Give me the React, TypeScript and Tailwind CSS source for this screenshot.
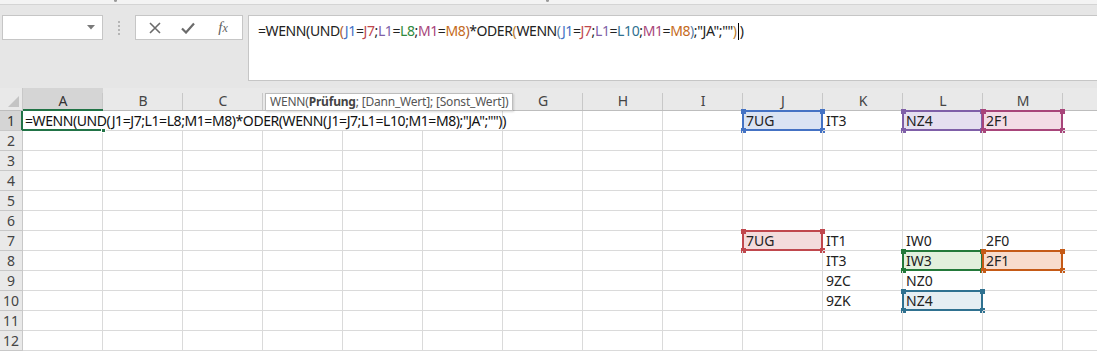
import React from "react";

const COLS = ["A", "B", "C", "D", "E", "F", "G", "H", "I", "J", "K", "L", "M", "N"];
const HIDDEN_LABELS = ["D", "E", "F", "N"];
const ROWS = [1, 2, 3, 4, 5, 6, 7, 8, 9, 10, 11, 12];

const VALUES: Record<string, string> = {
  J1: "7UG",
  K1: "IT3",
  L1: "NZ4",
  M1: "2F1",
  J7: "7UG",
  K7: "IT1",
  L7: "IW0",
  M7: "2F0",
  K8: "IT3",
  L8: "IW3",
  M8: "2F1",
  K9: "9ZC",
  L9: "NZ0",
  K10: "9ZK",
  L10: "NZ4",
};

type HL = { fill: string; border: string; sq: string };
const HIGHLIGHTS: Record<string, HL> = {
  J1: { fill: "bg-[#dae3f3]", border: "border-[#4472c4]", sq: "bg-[#4472c4]" },
  L1: { fill: "bg-[#e5dff0]", border: "border-[#7f5fa8]", sq: "bg-[#7f5fa8]" },
  M1: { fill: "bg-[#f3dce6]", border: "border-[#a8457a]", sq: "bg-[#a8457a]" },
  J7: { fill: "bg-[#f3dbdc]", border: "border-[#c0474d]", sq: "bg-[#c0474d]" },
  L8: { fill: "bg-[#e2f0dd]", border: "border-[#23793a]", sq: "bg-[#23793a]" },
  M8: { fill: "bg-[#f8dccc]", border: "border-[#c55a16]", sq: "bg-[#c55a16]" },
  L10: { fill: "bg-[#e5eef3]", border: "border-[#2f7190]", sq: "bg-[#2f7190]" },
};

const FONT = "font-['Segoe_UI','Noto_Sans','Open_Sans',sans-serif]";

function Seg({ c, children }: { c: string; children: React.ReactNode }) {
  return <span className={c}>{children}</span>;
}

function FormulaColored() {
  const blue = "text-[#4472c4]";
  const red = "text-[#c0474d]";
  const purple = "text-[#7f5fa8]";
  const green = "text-[#2f8a3e]";
  const magenta = "text-[#a8457a]";
  const orange = "text-[#c56a20]";
  const teal = "text-[#2f7190]";
  const p1 = "text-[#b0602d]";
  const p2 = "text-[#b87a2a]";
  const p3 = "text-[#5a7fa8]";
  return (
    <span>
      =WENN(UND<Seg c={p1}>(</Seg>
      <Seg c={blue}>J1</Seg>=<Seg c={red}>J7</Seg>;<Seg c={purple}>L1</Seg>=<Seg c={green}>L8</Seg>;
      <Seg c={magenta}>M1</Seg>=<Seg c={orange}>M8</Seg>
      <Seg c={p1}>)</Seg>*ODER<Seg c={p2}>(</Seg>WENN<Seg c={p3}>(</Seg>
      <Seg c={blue}>J1</Seg>=<Seg c={red}>J7</Seg>;<Seg c={purple}>L1</Seg>=<Seg c={teal}>L10</Seg>;
      <Seg c={magenta}>M1</Seg>=<Seg c={orange}>M8</Seg>
      <Seg c={p3}>)</Seg>;"JA";""<Seg c={p2}>)</Seg>
      <span className="inline-block w-px h-[17px] bg-black align-middle -mt-[2px] mx-[1px]" />
      <span>)</span>
    </span>
  );
}

function Corner({ pos, cls }: { pos: string; cls: string }) {
  return <span className={`absolute w-[5px] h-[5px] ${pos} ${cls}`} />;
}

function Cell({ id, col, row }: { id: string; col: string; row: number }) {
  const hl = HIGHLIGHTS[id];
  const v = VALUES[id];
  const isA1 = id === "A1";
  const hideRight = row === 1 && ["A", "B", "C", "D", "E"].includes(col);
  return (
    <div
      className={`relative w-[80px] h-[20px] shrink-0 border-b border-[#dadada] ${
        hideRight ? "" : "border-r"
      } ${hl ? hl.fill : ""}`}
    >
      {v && (
        <span className="absolute left-[3px] top-[1px] text-[14px] leading-[18px] text-[#222]">{v}</span>
      )}
      {isA1 && (
        <>
          <span className="absolute left-[2px] top-[1px] text-[14px] leading-[18px] tracking-[-0.42px] text-[#111] whitespace-nowrap z-10">
            =WENN(UND(J1=J7;L1=L8;M1=M8)*ODER(WENN(J1=J7;L1=L10;M1=M8);"JA";""))
          </span>
          <span className="absolute -left-px -bottom-px w-[81px] h-[2px] bg-[#217346]" />
          <span className="absolute -right-[3px] -bottom-[3px] w-[5px] h-[5px] bg-[#217346] border border-white z-20" />
        </>
      )}
      {hl && (
        <>
          <span className={`absolute -left-px -top-px -right-px -bottom-px border-2 ${hl.border}`} />
          <Corner pos="-left-[2px] -top-[2px]" cls={hl.sq} />
          <Corner pos="-right-[3px] -top-[2px]" cls={hl.sq} />
          <Corner pos="-left-[2px] -bottom-[3px]" cls={hl.sq} />
          <Corner pos="-right-[3px] -bottom-[3px]" cls={hl.sq} />
        </>
      )}
    </div>
  );
}

export default function App() {
  return (
    <div className={`relative w-[1097px] h-[351px] overflow-hidden bg-[#e6e6e6] ${FONT}`}>
      {/* top strip (bottom edge of the ribbon) */}
      <div className="relative h-[5px] bg-[#f3f3f3] border-b border-[#d4d4d4] overflow-hidden">
        <span className="absolute left-[114px] top-0 w-[3px] h-[2px] bg-[#9a9a9a] rounded-b-[2px]" />
        <span className="absolute left-[546px] top-0 w-[3px] h-[2px] bg-[#9a9a9a] rounded-b-[2px]" />
      </div>

      {/* formula bar area */}
      <div className="flex items-start h-[83px] pt-[10px]">
        <div className="ml-[2px] w-[101px] h-[25px] bg-white border border-[#c6c6c6] flex items-center justify-end pr-[7px]">
          <svg width="8" height="5" viewBox="0 0 8 5">
            <path d="M0 0 L8 0 L4 4.5 Z" fill="#7a7a7a" />
          </svg>
        </div>
        <div className="w-[32px] h-[25px] flex items-center justify-center">
          <div className="flex flex-col gap-[2px]">
            <span className="w-[2px] h-[2px] bg-[#b5b5b5]" />
            <span className="w-[2px] h-[2px] bg-[#b5b5b5]" />
            <span className="w-[2px] h-[2px] bg-[#b5b5b5]" />
            <span className="w-[2px] h-[2px] bg-[#b5b5b5]" />
          </div>
        </div>
        <div className="w-[108px] h-[25px] bg-white border border-[#c6c6c6] flex items-center">
          <div className="w-[36px] flex justify-center pl-[2px]">
            <svg width="12" height="12" viewBox="0 0 12 12">
              <path d="M1 1 L11 11 M11 1 L1 11" stroke="#6b6b6b" strokeWidth="1.6" />
            </svg>
          </div>
          <div className="w-[32px] flex justify-center">
            <svg width="14" height="12" viewBox="0 0 14 12">
              <path d="M1 6.5 L5 10.5 L13 1.5" stroke="#6b6b6b" strokeWidth="2.2" fill="none" />
            </svg>
          </div>
          <div className="w-[38px] flex justify-center">
            <span className="font-['Liberation_Serif',serif] italic text-[15px] leading-[16px] text-[#5f5f5f]">
              f<span className="text-[12px]">x</span>
            </span>
          </div>
        </div>
        <div className="ml-[5px] flex-1 h-[66px] bg-white border-y border-l border-[#c6c6c6] pl-[9px] pt-[5px]">
          <div className="text-[14px] leading-[20px] tracking-[-0.4px] text-[#222] whitespace-nowrap">
            <FormulaColored />
          </div>
        </div>
      </div>

      {/* grid */}
      <div className="bg-white">
        {/* header row */}
        <div className="flex h-[23px] bg-[#e9e9e9] border-b border-[#bdbdbd]">
          <div className="w-[23px] shrink-0 border-r border-[#c8c8c8] flex items-end justify-end pr-[3px] pb-[3px]">
            <svg width="11" height="11" viewBox="0 0 11 11">
              <path d="M11 0 L11 11 L0 11 Z" fill="#c4c4c4" />
            </svg>
          </div>
          {COLS.map((c) => (
            <div
              key={c}
              className={`relative w-[80px] shrink-0 flex items-center justify-center text-[14px] ${
                c === "A" ? "bg-[#d5d5d5] text-[#333]" : "text-[#444]"
              }`}
            >
              <span className="pt-[2px]">{HIDDEN_LABELS.includes(c) ? "" : c}</span>
              <span className="absolute right-0 top-[5px] bottom-0 w-px bg-[#c8c8c8]" />
              {c === "A" && <span className="absolute left-0 right-0 -bottom-px h-[2px] bg-[#217346]" />}
            </div>
          ))}
        </div>
        {ROWS.map((r) => (
          <div key={r} className="flex h-[20px]">
            <div
              className={`relative w-[23px] shrink-0 border-r border-b border-[#c8c8c8] flex items-center justify-center text-[14px] ${
                r === 1 ? "bg-[#d5d5d5] text-[#333]" : "bg-[#e9e9e9] text-[#444]"
              }`}
            >
              {r}
              {r === 1 && <span className="absolute -right-px top-0 bottom-0 w-[2px] bg-[#217346]" />}
            </div>
            {COLS.map((c) => (
              <Cell key={c} id={`${c}${r}`} col={c} row={r} />
            ))}
          </div>
        ))}
      </div>

      {/* tooltip */}
      <div className="absolute left-[265px] top-[93px] h-[18px] bg-white border border-[#bdbdbd] shadow-[1px_1px_2px_rgba(0,0,0,0.15)] px-[4px] flex items-center text-[12px] leading-[14px] tracking-[-0.2px] text-[#555] whitespace-nowrap z-30">
        WENN(<b className="font-bold text-[#444]">Prüfung</b>; [Dann_Wert]; [Sonst_Wert])
      </div>
    </div>
  );
}
